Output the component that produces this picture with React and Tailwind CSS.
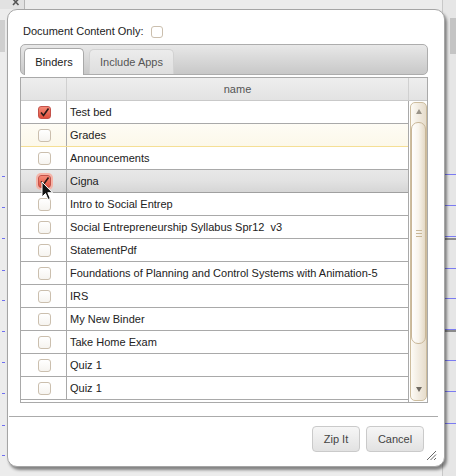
import React from 'react';

const binders = [
    { name: 'Test bed', checked: true },
    { name: 'Grades', state: 'hover' },
    { name: 'Announcements' },
    { name: 'Cigna', checked: true, state: 'selected' },
    { name: 'Intro to Social Entrep' },
    { name: 'Social Entrepreneurship Syllabus Spr12  v3' },
    { name: 'StatementPdf' },
    { name: 'Foundations of Planning and Control Systems with Animation-5' },
    { name: 'IRS' },
    { name: 'My New Binder' },
    { name: 'Take Home Exam' },
    { name: 'Quiz 1' },
    { name: 'Quiz 1' },
];

const ticks = [176, 207, 238, 270, 300, 331, 362, 393, 425, 455];

const CheckBox = ({ checked, focused }) => (
    <div
        className={
            'w-[13px] h-[13px] rounded-[3px] border flex items-center justify-center ' +
            (checked
                ? 'border-[#c4524a] bg-gradient-to-b from-[#f58a78] to-[#df4f3c]'
                : 'border-[#cbbfae] bg-gradient-to-b from-white to-[#f6f4f0]') +
            (focused ? ' ring-2 ring-[#f6b3a6]' : '')
        }
    >
        {checked && (
            <svg width="11" height="11" viewBox="0 0 11 11">
                <path d="M2 5.5 L4.5 8.5 L9.5 1.5" fill="none" stroke="#2a1a18" strokeWidth="1.6" />
            </svg>
        )}
    </div>
);

const Cursor = () => (
    <svg className="absolute left-[41px] top-[181px]" width="13" height="20" viewBox="0 0 13 20">
        <path
            d="M1 1 L1 16 L4.5 12.5 L7 18.5 L9.3 17.5 L6.8 11.7 L11.5 11.7 Z"
            fill="#111"
            stroke="#fff"
            strokeWidth="1"
            strokeLinejoin="round"
        />
    </svg>
);

const Row = ({ item }) => {
    let rowCls = 'bg-white border-[#a9a9a9]';
    if (item.state === 'hover') rowCls = 'bg-gradient-to-b from-[#fefcf5] to-[#fcf8ea] border-[#f5df95]';
    if (item.state === 'selected') rowCls = 'bg-gradient-to-b from-[#e8e8e8] via-[#e2e2e2] to-[#d6d6d6] border-[#a0a0a0]';
    return (
        <div className={'flex h-[23px] border-b ' + rowCls}>
            <div className="w-[46px] flex items-center justify-center border-r border-[#a9a9a9] pl-[2px]">
                <CheckBox checked={item.checked} focused={item.state === 'selected'} />
            </div>
            <div className="flex-1 flex items-center pl-[3px] text-[11px] text-[#222] whitespace-pre overflow-hidden">
                {item.name}
            </div>
        </div>
    );
};

const ScrollBar = () => (
    <div className="w-[19px] border-l border-[#a9a9a9] pl-[1px] pt-[1px]">
        <div className="relative w-[17px] h-[299px] rounded-[5px] border border-[#cdbd9e] bg-gradient-to-r from-[#fdfbf6] to-[#e6dccb]">
            <div className="absolute left-[5px] top-[6px] w-0 h-0 border-l-[3px] border-r-[3px] border-b-[5px] border-l-transparent border-r-transparent border-b-[#9a9488]" />
            <div className="absolute left-0 top-[19px] w-[15px] h-[222px] rounded-[7px] border border-[#c9b799] bg-gradient-to-r from-white via-[#f8f4ec] to-[#e4d9c6] flex flex-col items-center justify-center gap-[2px]">
                <div className="w-[6px] h-[1px] bg-[#c9b797]" />
                <div className="w-[6px] h-[1px] bg-[#c9b797]" />
                <div className="w-[6px] h-[1px] bg-[#c9b797]" />
            </div>
            <div className="absolute left-[5px] bottom-[8px] w-0 h-0 border-l-[3px] border-r-[3px] border-t-[5px] border-l-transparent border-r-transparent border-t-[#6f6a62]" />
        </div>
    </div>
);

export default function App() {
    return (
        <div
            className="relative w-[456px] h-[476px] overflow-hidden bg-[#ececec]"
            style={{ fontFamily: '"Liberation Sans", Arial, sans-serif' }}
        >
            {/* page behind the dialog */}
            <div className="absolute left-0 top-0 w-[25px] h-[9px] bg-[#e2e2e2] border-r border-[#b5b5b5]" />
            <svg className="absolute left-[12px] top-0" width="8" height="6" viewBox="0 0 8 6">
                <path d="M1 -1 L6.5 5 M6.5 -1 L1 5" stroke="#555" strokeWidth="1.6" />
            </svg>
            <div className="absolute left-0 top-[20px] w-[5px] h-[32px] bg-[#cfcfcf]" />
            <div className="absolute left-[442px] top-0 w-[14px] h-[476px] bg-[#e6e6e6] border-l border-[#c8c8c8]" />
            <div className="absolute left-[450px] top-[18px] w-[6px] h-[36px] bg-[#c4c4c4]" />
            {ticks.map(t => (
                <div key={'l' + t} className="absolute left-[2px] w-[3px] h-[1px] bg-[#6f6ff0]" style={{ top: t }} />
            ))}
            {ticks.slice(0, 9).map(t => (
                <div key={'r' + t} className="absolute left-[443px] w-[13px] h-[1px] bg-[#7b7bf2]" style={{ top: t - 2 }} />
            ))}
            <div className="absolute left-[443px] top-[238px] w-[13px] h-[2px] bg-[#8a8a8a]" />
            <div className="absolute left-[443px] top-[330px] w-[13px] h-[2px] bg-[#8a8a8a]" />

            {/* dialog */}
            <div className="absolute left-[7px] top-[9px] w-[438px] h-[458px] bg-white border border-[#a5a5a5] rounded-[10px] shadow-[2px_3px_3px_rgba(0,0,0,0.45)] flex flex-col">
                <div className="flex items-center h-[13px] mt-[15px] ml-[15px] text-[11px] text-[#222]">
                    <span>Document Content Only:</span>
                    <div className="ml-[8px] w-[12px] h-[12px] rounded-[3px] border border-[#cbbfae] bg-white" />
                </div>

                <div className="mt-[6px] ml-[12px] w-[408px] h-[31px] rounded-[5px] border border-[#adadad] bg-gradient-to-b from-[#e8e8e8] to-[#c8c8c8] flex items-end pl-[3px] gap-[5px]">
                    <div className="relative top-[1px] w-[60px] h-[27px] rounded-t-[5px] border border-b-0 border-[#a9a9a9] bg-white flex items-center justify-center text-[11px] text-[#222]">
                        Binders
                    </div>
                    <div className="w-[85px] h-[25px] rounded-t-[5px] border border-b-0 border-[#d2d2d2] bg-gradient-to-b from-[#ececec] to-[#dedede] flex items-center justify-center text-[11px] text-[#555]">
                        Include Apps
                    </div>
                </div>

                <div className="mt-[2px] ml-[12px] w-[408px] border border-[#a9a9a9]">
                    <div className="flex h-[23px] border-b border-[#c9c9c9] bg-gradient-to-b from-[#eeeeee] to-[#e3e3e3] text-[11px] text-[#555]">
                        <div className="w-[46px] border-r border-[#d0d0d0]" />
                        <div className="flex-1 flex items-center justify-center border-r border-[#d0d0d0]">name</div>
                        <div className="w-[18px]" />
                    </div>
                    <div className="flex h-[301px]">
                        <div className="flex-1">
                            {binders.map((b, i) => (
                                <Row key={i} item={b} />
                            ))}
                        </div>
                        <ScrollBar />
                    </div>
                </div>

                <div className="mt-[13px] ml-[1px] w-[429px] h-[1px] bg-[#ababab]" />

                <div className="flex justify-end gap-[6px] mt-[9px] mr-[20px]">
                    <button className="w-[48px] h-[26px] rounded-[4px] border border-[#cacaca] bg-gradient-to-b from-[#f6f6f6] to-[#e2e2e2] text-[11px] text-[#444]">
                        Zip It
                    </button>
                    <button className="w-[58px] h-[26px] rounded-[4px] border border-[#cacaca] bg-gradient-to-b from-[#f6f6f6] to-[#e2e2e2] text-[11px] text-[#444]">
                        Cancel
                    </button>
                </div>

                <svg className="absolute right-[7px] bottom-[5px]" width="11" height="11" viewBox="0 0 11 11">
                    <path d="M10 1 L1 10 M10 4.5 L4.5 10 M10 8 L8 10" stroke="#666" strokeWidth="1" />
                </svg>
            </div>

            <Cursor />
        </div>
    );
}
